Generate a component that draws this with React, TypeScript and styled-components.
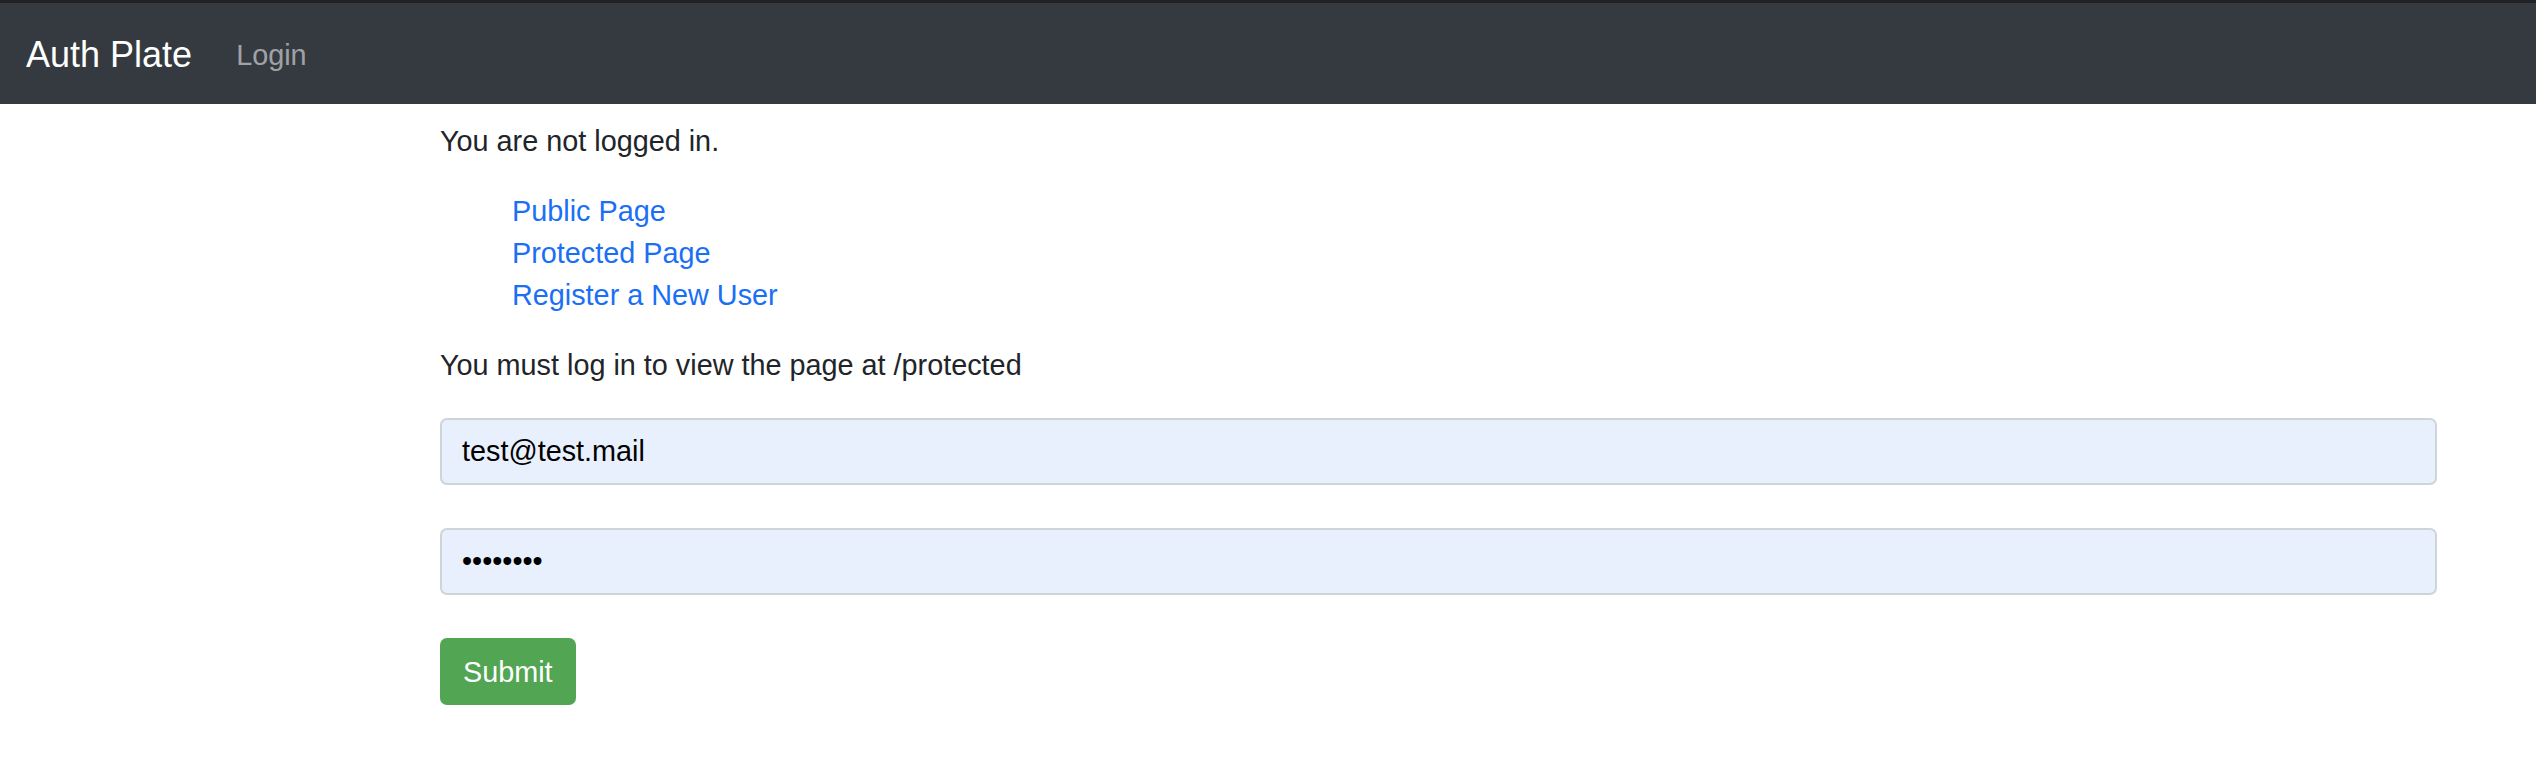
import React from "react";
import styled, { createGlobalStyle } from "styled-components";

const GlobalStyle = createGlobalStyle`
  html, body { margin: 0; padding: 0; background: #ffffff; }
  body {
    font-family: "Liberation Sans", Arial, Helvetica, sans-serif;
    font-size: 28.8px;
    line-height: 42px;
    color: #212529;
  }
  * { box-sizing: border-box; }
`;

const TopStrip = styled.div`
  height: 3px;
  background: #1f2124;
`;

const Navbar = styled.nav`
  height: 101px;
  background: #343a40;
  display: flex;
  align-items: center;
  padding: 0 26px;
`;

const Brand = styled.a`
  font-size: 36px;
  line-height: 52px;
  color: #ffffff;
  text-decoration: none;
  margin-right: 30px;
  margin-top: 2px;
`;

const NavLink = styled.a`
  font-size: 28.8px;
  line-height: 42px;
  color: rgba(255, 255, 255, 0.55);
  text-decoration: none;
  padding: 0 14px;
  margin-top: 2px;
`;

const Main = styled.main`
  margin-left: 440px;
  width: 1997px;
  padding-top: 16px;
`;

const Paragraph = styled.p`
  margin: 0 0 28px;
`;

const LinkList = styled.ul`
  list-style: none;
  margin: 0 0 28px;
  padding-left: 72px;
`;

const LinkItem = styled.li`
  line-height: 42px;
`;

const TextLink = styled.a`
  color: #1a6ff5;
  text-decoration: none;
`;

const Form = styled.form`
  display: flex;
  flex-direction: column;
  align-items: flex-start;
  gap: 43px;
  padding-top: 4px;
`;

const Field = styled.input`
  width: 100%;
  height: 67px;
  padding: 10px 20px;
  font-family: "Liberation Sans", Arial, Helvetica, sans-serif;
  font-size: 28.8px;
  line-height: 42px;
  color: #000000;
  background: #e8f0fe;
  border: 2px solid #ced4da;
  border-radius: 7px;
  outline: none;
`;

const SubmitButton = styled.button`
  height: 67px;
  padding: 0 21px;
  font-family: "Liberation Sans", Arial, Helvetica, sans-serif;
  font-size: 28.8px;
  line-height: 42px;
  color: #ffffff;
  background: #52a552;
  border: 2px solid #52a552;
  border-radius: 7px;
  cursor: pointer;
`;

export default function App() {
  return (
    <>
      <GlobalStyle />
      <TopStrip />
      <Navbar>
        <Brand href="#">Auth Plate</Brand>
        <NavLink href="#">Login</NavLink>
      </Navbar>
      <Main>
        <Paragraph>You are not logged in.</Paragraph>
        <LinkList>
          <LinkItem><TextLink href="#">Public Page</TextLink></LinkItem>
          <LinkItem><TextLink href="#">Protected Page</TextLink></LinkItem>
          <LinkItem><TextLink href="#">Register a New User</TextLink></LinkItem>
        </LinkList>
        <Paragraph>You must log in to view the page at /protected</Paragraph>
        <Form onSubmit={(e) => e.preventDefault()}>
          <Field type="email" defaultValue="test@test.mail" />
          <Field type="password" defaultValue="12345678" />
          <SubmitButton type="submit">Submit</SubmitButton>
        </Form>
      </Main>
    </>
  );
}
